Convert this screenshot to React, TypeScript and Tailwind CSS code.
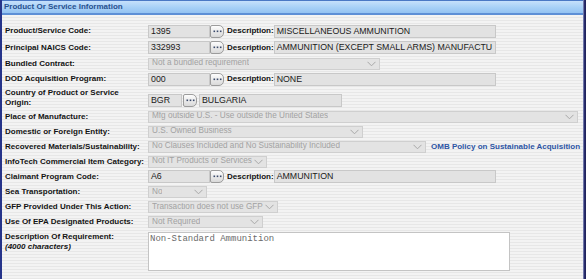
import React from "react";

const Chevron = () => (
  <svg width="9" height="6" viewBox="0 0 9 6" className="shrink-0 ml-[2px]">
    <path d="M0.5 0.8 L4.5 4.8 L8.5 0.8" fill="none" stroke="#a8a8a8" strokeWidth="1" />
  </svg>
);

function Select({ w, text }: { w: string; text: string }) {
  return (
    <div
      className={`${w} h-[12px] flex items-center justify-between border border-[#cfcfcf] bg-[#e3e3e3] pl-[3px] pr-[3px] text-[8.2px] leading-none text-[#a2a2a2] font-['Liberation_Sans',Arial,sans-serif] whitespace-nowrap`}
    >
      <span className="min-w-0 overflow-hidden">{text}</span>
      <Chevron />
    </div>
  );
}

function TextBox({ w, text }: { w: string; text: string }) {
  return (
    <div
      className={`${w} h-[13px] flex items-center border border-[#c8c8c8] bg-[#e2e2e2] pl-[2px] text-[8.8px] leading-none text-[#1a1a1a] font-['Liberation_Sans',Arial,sans-serif] overflow-hidden whitespace-nowrap`}
    >
      {text}
    </div>
  );
}

function Dots() {
  return (
    <div className="w-[14px] h-[13px] shrink-0 flex items-center justify-center rounded-r-[5px] rounded-l-[2px] border border-[#9c9c9c] bg-gradient-to-b from-[#fdfdfd] to-[#d9d9d9]">
      <svg width="9" height="3" viewBox="0 0 9 3">
        <rect x="0.5" y="0.5" width="1.6" height="1.6" fill="#3b4a6b" />
        <rect x="3.7" y="0.5" width="1.6" height="1.6" fill="#3b4a6b" />
        <rect x="6.9" y="0.5" width="1.6" height="1.6" fill="#3b4a6b" />
      </svg>
    </div>
  );
}

function DescLabel() {
  return (
    <span className="ml-[3px] text-[8px] font-bold text-[#111] font-['Liberation_Sans',Arial,sans-serif]">
      Description:
    </span>
  );
}

function Label({ children }: { children: React.ReactNode }) {
  return (
    <div className="w-[143px] shrink-0 text-[8px] leading-[10px] font-bold text-[#141414] font-['Liberation_Sans',Arial,sans-serif]">
      {children}
    </div>
  );
}

function CodeRow({ label, code, desc, h }: { label: string; code: string; desc: string; h: string }) {
  return (
    <div className={`${h} flex items-center`}>
      <Label>{label}</Label>
      <TextBox w="w-[62px]" text={code} />
      <Dots />
      <DescLabel />
      <TextBox w="w-[222px]" text={desc} />
    </div>
  );
}

export default function App() {
  return (
    <div className="w-[586px] h-[279px] overflow-hidden flex bg-[#e9e9e9]">
      <div className="w-[2px] shrink-0 bg-[#26348a]" />
      <div className="flex-1 flex flex-col bg-[repeating-linear-gradient(180deg,#f3f3f3_0px,#f3f3f3_2px,#e7e7e7_2px,#e7e7e7_3px)]">
        <div className="h-[15px] shrink-0 border-t border-[#4a78c4] border-b-2 border-b-[#5d8fd6] bg-gradient-to-b from-[#c6e0fb] via-[#a9d1f7] to-[#93c2f2] flex items-center pl-[2px]">
          <span className="text-[8px] font-bold text-[#27508f] font-['Liberation_Sans',Arial,sans-serif]">
            Product Or Service Information
          </span>
        </div>
        <div className="flex flex-col pl-[3px] pt-[8px]">
          <CodeRow h="h-[16px]" label="Product/Service Code:" code="1395" desc="MISCELLANEOUS AMMUNITION" />
          <CodeRow h="h-[17px]" label="Principal NAICS Code:" code="332993" desc="AMMUNITION (EXCEPT SMALL ARMS) MANUFACTU" />
          <div className="h-[15px] flex items-center">
            <Label>Bundled Contract:</Label>
            <Select w="w-[232px]" text="Not a bundled requirement" />
          </div>
          <CodeRow h="h-[16px]" label="DOD Acquisition Program:" code="000" desc="NONE" />
          <div className="h-[22px] flex items-center">
            <Label>
              Country of Product or Service
              <br />
              Origin:
            </Label>
            <div className="flex items-center mt-[4px]">
              <TextBox w="w-[34px]" text="BGR" />
              <div className="ml-[1px]">
                <Dots />
              </div>
              <div className="ml-[2px]">
                <TextBox w="w-[143px]" text="BULGARIA" />
              </div>
            </div>
          </div>
          <div className="h-[15px] flex items-center">
            <Label>Place of Manufacture:</Label>
            <Select w="w-[430px]" text="Mfg outside U.S. - Use outside the United States" />
          </div>
          <div className="h-[15px] flex items-center">
            <Label>Domestic or Foreign Entity:</Label>
            <Select w="w-[215px]" text="U.S. Owned Business" />
          </div>
          <div className="h-[15px] flex items-center">
            <Label>Recovered Materials/Sustainability:</Label>
            <Select w="w-[278px]" text="No Clauses Included and No Sustainability Included" />
            <span className="ml-[5px] text-[8px] font-bold text-[#2d55a4] font-['Liberation_Sans',Arial,sans-serif] whitespace-nowrap">
              OMB Policy on Sustainable Acquisition
            </span>
          </div>
          <div className="h-[15px] flex items-center">
            <Label>InfoTech Commercial Item Category:</Label>
            <Select w="w-[119px]" text="Not IT Products or Services" />
          </div>
          <CodeRow h="h-[15px]" label="Claimant Program Code:" code="A6" desc="AMMUNITION" />
          <div className="h-[16px] flex items-center">
            <Label>Sea Transportation:</Label>
            <Select w="w-[59px]" text="No" />
          </div>
          <div className="h-[14px] flex items-center">
            <Label>GFP Provided Under This Action:</Label>
            <Select w="w-[130px]" text="Transaction does not use GFP" />
          </div>
          <div className="h-[16px] flex items-center">
            <Label>Use Of EPA Designated Products:</Label>
            <Select w="w-[115px]" text="Not Required" />
          </div>
          <div className="flex items-start pt-[2px]">
            <Label>
              Description Of Requirement:
              <br />
              <span className="italic">(4000 characters)</span>
            </Label>
            <div className="w-[362px] h-[39px] border border-[#c4c4c4] bg-white pl-[1px] pt-[1px] text-[9px] leading-[11px] text-[#6a6a6a] font-['Liberation_Mono','Courier_New',monospace]">
              Non-Standard Ammunition
            </div>
          </div>
        </div>
      </div>
      <div className="w-[3px] shrink-0 bg-gradient-to-r from-[#9aa0c8] via-[#2a2e6e] to-[#1c1f55]" />
    </div>
  );
}
